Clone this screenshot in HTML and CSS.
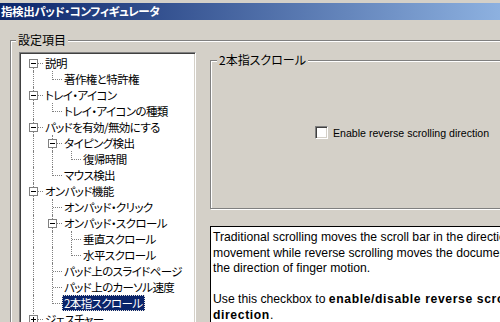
FILE: index.html
```html
<!doctype html>
<html lang="ja">
<head>
	<meta charset="utf-8">
	<title>指検出パッド・コンフィギュレータ</title>
	<link rel="stylesheet" href="styles.css">
</head>

<body>
	<div class="window">
		<div class="titlebar">指検出パッド・コンフィギュレータ</div>

		<fieldset class="group settings">
			<legend>設定項目</legend>
			<div class="settingsBody">

				<!-- tree: one cell per level, lines drawn by the cell class -->
				<ul class="tree">
					<li class="row"><span class="cell top"><span class="expander"></span></span><span class="label">説明</span></li>
					<li class="row"><span class="cell pipe"></span><span class="cell elbow"></span><span class="label">著作権と特許権</span></li>
					<li class="row"><span class="cell tee"><span class="expander"></span></span><span class="label">トレイ・アイコン</span></li>
					<li class="row"><span class="cell pipe"></span><span class="cell elbow"></span><span class="label">トレイ・アイコンの種類</span></li>
					<li class="row"><span class="cell tee"><span class="expander"></span></span><span class="label">パッドを有効/無効にする</span></li>
					<li class="row"><span class="cell pipe"></span><span class="cell tee"><span class="expander"></span></span><span class="label">タイピング検出</span></li>
					<li class="row"><span class="cell pipe"></span><span class="cell pipe"></span><span class="cell elbow"></span><span class="label">復帰時間</span></li>
					<li class="row"><span class="cell pipe"></span><span class="cell elbow"></span><span class="label">マウス検出</span></li>
					<li class="row"><span class="cell tee"><span class="expander"></span></span><span class="label">オンパッド機能</span></li>
					<li class="row"><span class="cell pipe"></span><span class="cell tee"></span><span class="label">オンパッド・クリック</span></li>
					<li class="row"><span class="cell pipe"></span><span class="cell tee"><span class="expander"></span></span><span class="label">オンパッド・スクロール</span></li>
					<li class="row"><span class="cell pipe"></span><span class="cell pipe"></span><span class="cell tee"></span><span class="label">垂直スクロール</span></li>
					<li class="row"><span class="cell pipe"></span><span class="cell pipe"></span><span class="cell elbow"></span><span class="label">水平スクロール</span></li>
					<li class="row"><span class="cell pipe"></span><span class="cell tee"></span><span class="label">パッド上のスライドページ</span></li>
					<li class="row"><span class="cell pipe"></span><span class="cell tee"></span><span class="label">パッド上のカーソル速度</span></li>
					<li class="row"><span class="cell pipe"></span><span class="cell elbow"></span><span class="label selected">2本指スクロール</span></li>
					<li class="row"><span class="cell elbow"><span class="expander plus"></span></span><span class="label">ジェスチャー</span></li>
				</ul>

				<div class="panel">
					<fieldset class="group page">
						<legend>2本指スクロール</legend>
						<label class="check"><span class="checkbox"></span>Enable reverse scrolling direction</label>
					</fieldset>

					<div class="help">
						<p>Traditional scrolling moves the scroll bar in the direction of finger<br>
						movement while reverse scrolling moves the document in<br>
						the direction of finger motion.</p>
						<p>Use this checkbox to <b>enable/disable reverse scrolling</b><br>
						<b>direction</b>.</p>
					</div>
				</div>

			</div>
		</fieldset>
	</div>
</body>
</html>
```

FILE: styles.css
```css
* {
	margin: 0;
	padding: 0;
	box-sizing: border-box;
}

html, body {
	width: 500px;
	height: 322px;
	overflow: hidden;
	background-color: #d4d0c8;
}

body {
	font-family: "Noto Sans CJK JP", sans-serif;
	font-size: 11.5px;
	letter-spacing: -0.6px;
	color: #000;
	font-feature-settings: "palt";
}

.window {
	padding-top: 3px;
}

.titlebar {
	height: 17px;
	line-height: 17px;
	padding-left: 1px;
	color: #fff;
	font-weight: bold;
	letter-spacing: -0.4px;
	white-space: nowrap;
	background: linear-gradient(to right, #0a246a 0, #8db1e0 100%);
}

/* etched group box */
.group {
	border: 1px solid #808080;
	box-shadow: inset 1px 1px 0 #fff, 1px 1px 0 #fff;
	min-width: 0;
}
.group legend {
	padding: 0 2px;
	line-height: 16px;
	background-color: #d4d0c8;
}

.settings {
	margin: 12px 0 0 10px;
	width: 540px;
	height: 320px;
}
.settings legend {
	margin-left: 5px;
	font-size: 12px;
	letter-spacing: 0;
}

.settingsBody {
	display: flex;
	align-items: flex-start;
	gap: 14px;
	padding: 4px 0 0 8px;
}

/* tree view */
.tree {
	flex: none;
	width: 177px;
	height: 300px;
	list-style: none;
	padding: 2px 0 0 4px;
	background-color: #fff;
	border: 1px solid;
	border-color: #808080 #fff #fff #808080;
	box-shadow: inset 1px 1px 0 #404040, inset -1px -1px 0 #d4d0c8;
}
.row {
	display: flex;
	height: 16px;
	line-height: 16px;
	white-space: nowrap;
}
.cell {
	flex: none;
	width: 19px;
	height: 16px;
	position: relative;
}
.pipe::before,
.tee::before,
.elbow::before,
.top::before {
	content: "";
	position: absolute;
	left: 9px;
	border-left: 1px dotted #808080;
}
.pipe::before,
.tee::before {
	top: 0;
	bottom: 0;
}
.elbow::before {
	top: 0;
	height: 9px;
}
.top::before {
	top: 8px;
	bottom: 0;
}
.tee::after,
.elbow::after,
.top::after {
	content: "";
	position: absolute;
	left: 10px;
	top: 8px;
	width: 9px;
	border-top: 1px dotted #808080;
}

.expander {
	position: absolute;
	left: 5px;
	top: 4px;
	width: 9px;
	height: 9px;
	border: 1px solid #808080;
	background-color: #fff;
	z-index: 1;
}
.expander::before {
	content: "";
	position: absolute;
	left: 1px;
	top: 3px;
	width: 5px;
	height: 1px;
	background-color: #000;
}
.plus::after {
	content: "";
	position: absolute;
	left: 3px;
	top: 1px;
	width: 1px;
	height: 5px;
	background-color: #000;
}

.label {
	padding: 0 2px;
}
.selected {
	background-color: #0a246a;
	color: #fff;
	outline: 1px dotted #e8e4dc;
	outline-offset: -1px;
}

/* right side */
.panel {
	flex: none;
	width: 320px;
}
.page {
	height: 157px;
}
.page legend {
	margin-left: 6px;
}

.check {
	display: flex;
	align-items: center;
	padding: 58px 0 0 104px;
	font-family: "Liberation Sans", Arial, sans-serif;
	font-size: 10.6px;
	letter-spacing: 0;
	white-space: nowrap;
}
.checkbox {
	flex: none;
	width: 13px;
	height: 13px;
	margin-right: 5px;
	background-color: #fff;
	border: 1px solid;
	border-color: #808080 #fff #fff #808080;
	box-shadow: inset 1px 1px 0 #404040, inset -1px -1px 0 #d4d0c8;
}

.help {
	margin-top: 17px;
	height: 120px;
	padding: 3px 2px;
	background-color: #fff;
	border: 1px solid #000;
	font-family: "Liberation Sans", Arial, sans-serif;
	font-size: 12.2px;
	letter-spacing: 0;
	line-height: 15.5px;
	white-space: nowrap;
	overflow: hidden;
}
.help p + p {
	margin-top: 15.5px;
}
.help b {
	letter-spacing: 0.6px;
}
```
